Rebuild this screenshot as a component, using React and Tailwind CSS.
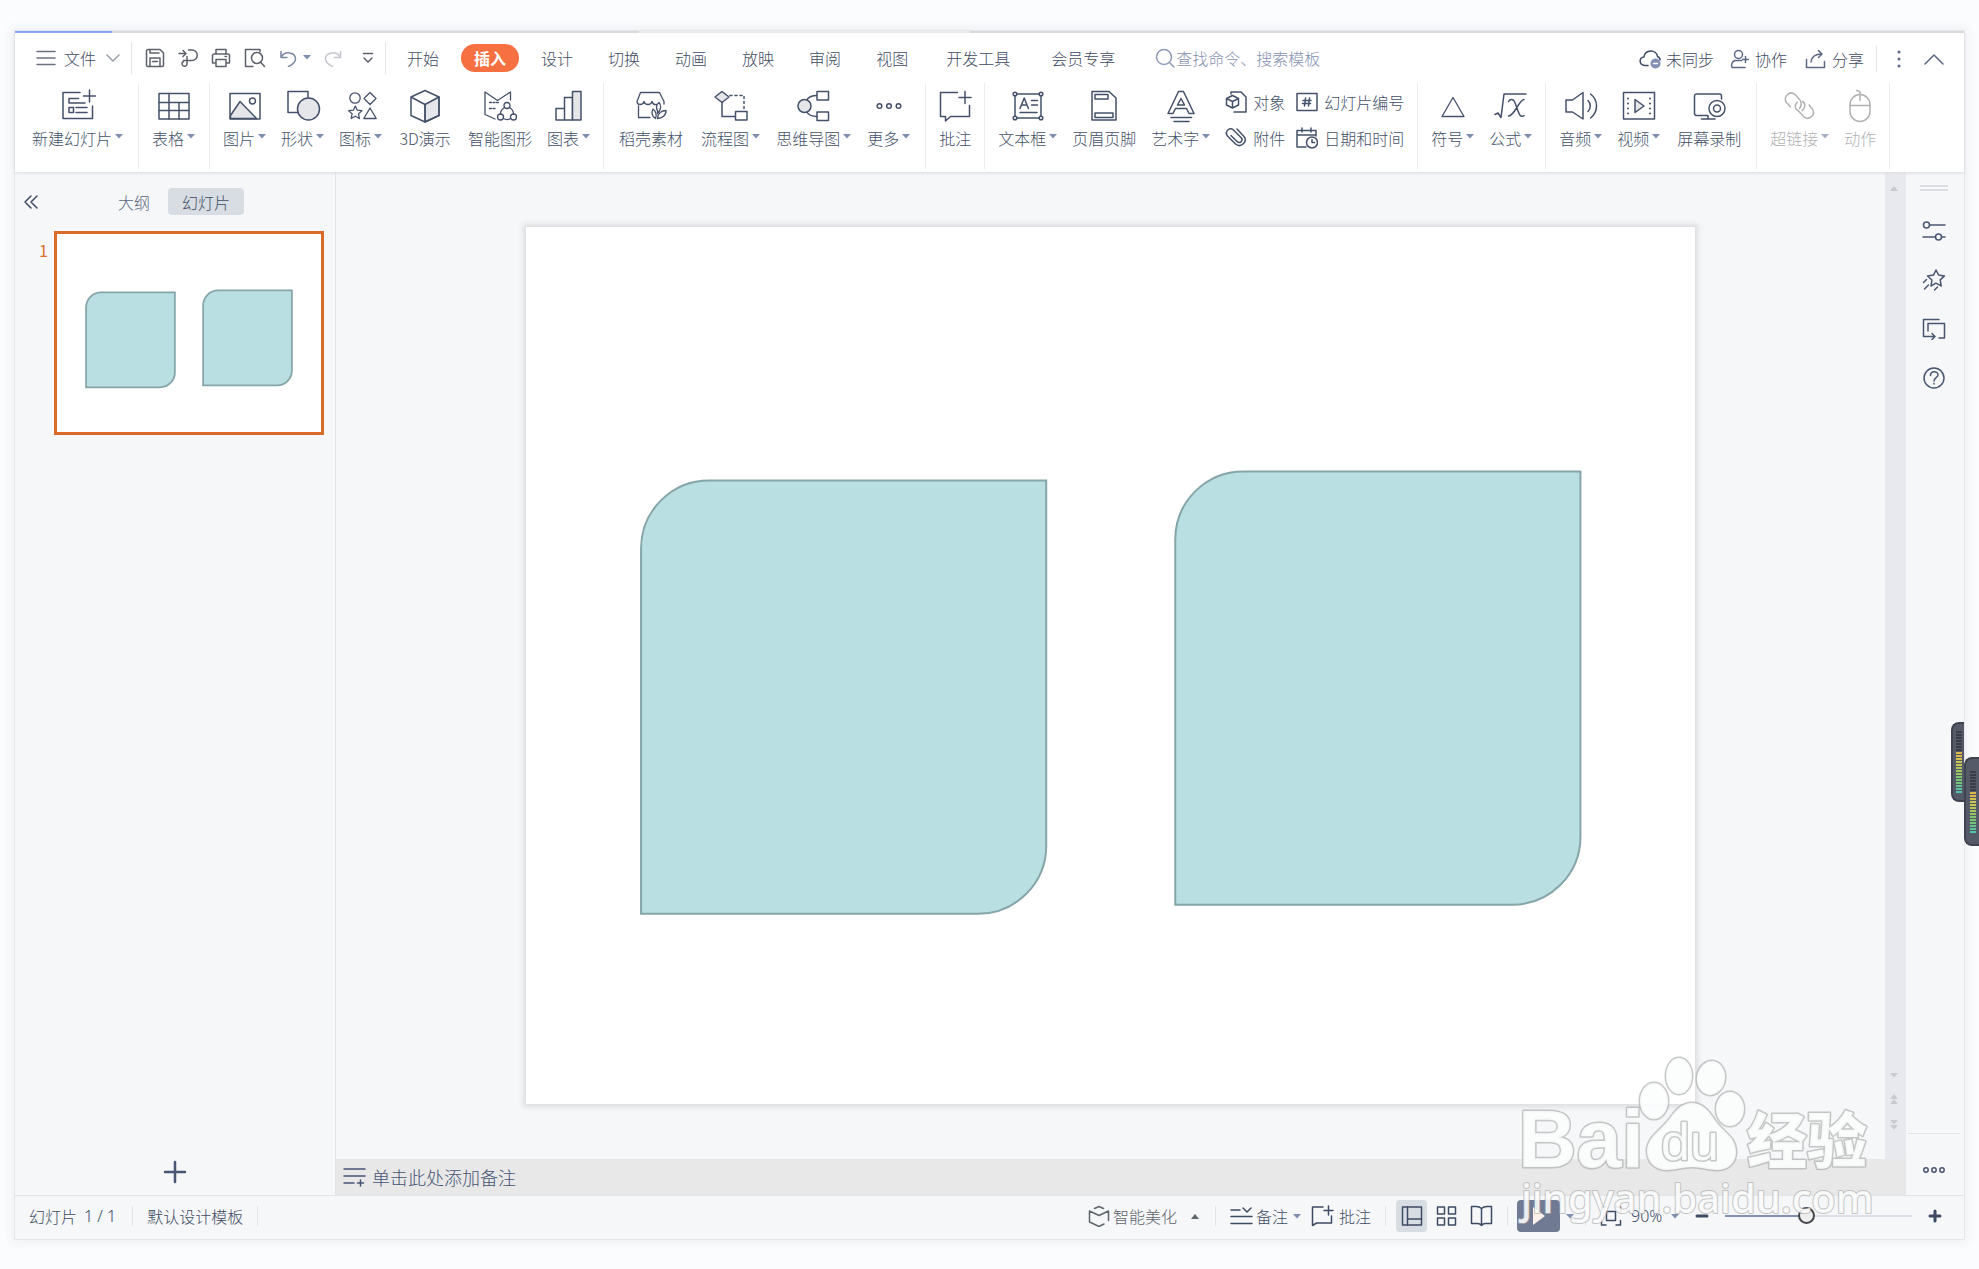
import React, { useState } from 'react';

/* ---------- icons ---------- */

const Svg = ({ w = 36, h = 34, sw = 1.5, className = '', children }) => (
  <svg
    width={w}
    height={h}
    viewBox={`0 0 ${w} ${h}`}
    fill="none"
    stroke="currentColor"
    strokeWidth={sw}
    strokeLinejoin="round"
    strokeLinecap="round"
    aria-hidden="true"
    className={`shrink-0 ${className}`}
  >
    {children}
  </svg>
);

const SHADE = '#e4e6ea';

const icons = {
  newSlide: (
    <Svg>
      <path d="M20 3.500H3v26h29.500V17M29.500 1v12M23.500 7h12M9 9.500h9.500M9 9.500v4.500h16M16 18.500h11M16 23.500h11" />
      <rect x="9" y="18.500" width="4.500" height="5" />
    </Svg>
  ),
  table: (
    <Svg>
      <rect x="3" y="4.500" width="30" height="25.500" />
      <path d="M3 13.500h30M3 21.500h30M13 4.500V30M23 13.500V30" />
    </Svg>
  ),
  picture: (
    <Svg>
      <path d="M3.500 26.500L13 12.500 29.500 29.500H3.500z" fill={SHADE} />
      <rect x="3" y="4.500" width="30" height="25.500" />
      <circle cx="25.500" cy="12" r="3" />
    </Svg>
  ),
  shape: (
    <Svg>
      <rect x="3" y="2.500" width="20" height="21" />
      <circle cx="23.500" cy="20" r="11" fill={SHADE} />
    </Svg>
  ),
  glyphs: (
    <Svg sw={1.300}>
      <circle cx="12" cy="9" r="5.200" />
      <path d="M27 3.500l6 6-6 6-6-6zM27 19l6.200 10.500H20.800zM12.300 17l2 4.200 4.600.5-3.400 3.200.9 4.600-4.100-2.300-4.100 2.300.9-4.600-3.400-3.200 4.600-.5z" />
    </Svg>
  ),
  cube: (
    <Svg>
      <path d="M18 15.500L32 8v18.500L18 33z" fill={SHADE} />
      <path d="M18 1.500L32 8v18.500L18 33 4 26.500V8zM4 8l14 7.500V33" />
    </Svg>
  ),
  smart: (
    <Svg sw={1.300}>
      <path d="M13 30L3 25.500V3l12.500 8.500L28.500 3v8" />
      <path d="M7.500 13.500h9M7.500 19.500h7" strokeDasharray="2 1.500" />
      <circle cx="25" cy="16.500" r="3" />
      <circle cx="18.500" cy="28" r="3" />
      <circle cx="31.500" cy="28" r="3" />
      <path d="M22.500 18.500c-2.500 1.500-4 3.500-4 6.500M27.500 18.500c2.500 1.500 4 3.500 4 6.500M21.500 29.500c2 1.200 5 1.200 7 0" />
    </Svg>
  ),
  chart: (
    <Svg>
      <path d="M5 31V19.500h8.500V31zM13.500 31V8.500h8V31z" />
      <path d="M21.500 31V2.500H30V31z" fill={SHADE} />
    </Svg>
  ),
  store: (
    <Svg sw={1.300}>
      <path d="M5.500 17v11.500H17M4 12.500L7.500 3.500h19L31 12.500M4 12.500c0 4 6 4 7 0 1 4 7 4 8 0 .8 2.500 2.500 3.500 4.500 3M31 12.500V15" />
      <path d="M22.500 29.500c-4-2-4-6.500-2.500-9.500 3 2 4 6.500 2.500 9.500zM24.500 22c-1.500-3-1-6.500 1.500-8.500 2.500 2.500 2.500 7-1.500 11zM24.500 29.500c0-5 4-8 8.500-8 .5 4.500-4 8-8.500 8z" />
    </Svg>
  ),
  flow: (
    <Svg>
      <path d="M9 2.500L16 8l-7 5.500L2 8z" fill={SHADE} />
      <path d="M9 13.500v14h13" />
      <path d="M17 6.500h14v15" strokeDasharray="2 3" />
      <rect x="22.500" y="22.500" width="11.500" height="8.500" />
    </Svg>
  ),
  mind: (
    <Svg>
      <path d="M21 6.500c-6 0-9 2-10.500 5M21 27.500c-6 0-9-2-10.500-5" />
      <circle cx="8.500" cy="17" r="6.500" fill={SHADE} />
      <rect x="21" y="2.500" width="11.500" height="8.500" />
      <rect x="21" y="23" width="11.500" height="8.500" />
    </Svg>
  ),
  more: (
    <Svg>
      <circle cx="8.500" cy="17" r="2.300" />
      <circle cx="18" cy="17" r="2.300" />
      <circle cx="27.500" cy="17" r="2.300" />
    </Svg>
  ),
  comment: (
    <Svg>
      <path d="M20.500 3.500h-17v24H8.500V32l5-4.500h19V16.500M28 2.500v12M22 8.500h12" />
    </Svg>
  ),
  textBox: (
    <Svg>
      <rect x="5" y="5" width="26" height="24" />
      <path d="M10 19.500l4.200-10.500 4.200 10.500M11.500 16h5.500M21.500 11.500h6M21.500 16h6M10 23.500h17" />
      <g fill="#fff">
        <circle cx="5" cy="5" r="1.800" />
        <circle cx="31" cy="5" r="1.800" />
        <circle cx="5" cy="29" r="1.800" />
        <circle cx="31" cy="29" r="1.800" />
      </g>
    </Svg>
  ),
  headerFooter: (
    <Svg>
      <path d="M6 2.500h17L30 9v22H6z" />
      <rect x="9" y="5.500" width="13" height="4.500" />
      <rect x="9" y="24" width="18" height="4.500" />
    </Svg>
  ),
  wordArt: (
    <Svg>
      <path d="M15.500 2.500h5L31 24.500h-5l-2.500-5h-11l-2.500 5H5zM18 9.500l-3.500 6.500h7zM8 28.500h20.500M11 32.500h15" />
    </Svg>
  ),
  symbol: (
    <Svg sw={1.300}>
      <path d="M18 8.500L29 27.500H7z" />
    </Svg>
  ),
  formula: (
    <Svg>
      <path d="M2 25.500l3-1.500 3 4.500L11 5h22M15.500 12.500c1-2.500 4.500-3 6 0l4.500 12c1.200 3 3.500 3.500 5 2M31 10.500c-5.500 1-9 16-15.500 16.500" />
    </Svg>
  ),
  audio: (
    <Svg>
      <path d="M3 11h6.500L20 3.500V30L9.500 23H3zM25 11.500c3 3 3 8 0 11M27.500 5c8 6 8 18 0 24" />
    </Svg>
  ),
  video: (
    <Svg>
      <rect x="2.500" y="3.500" width="31" height="26.500" />
      <path d="M14 10.500l9 6.500-9 6.500z" fill={SHADE} />
      <path d="M7 9.500v.1M7 14.500v.1M7 19.500v.1M7 24.500v.1M29 9.500v.1M29 14.500v.1M29 19.500v.1M29 24.500v.1" strokeWidth="2" />
    </Svg>
  ),
  record: (
    <Svg>
      <path d="M17 26.500H5.500a2 2 0 0 1-2-2V7a2 2 0 0 1 2-2h23a2 2 0 0 1 2 2v3M10.500 30H24M17 26.500V30" />
      <circle cx="26" cy="19.500" r="8" fill="#fff" />
      <circle cx="26" cy="19.500" r="3.500" />
    </Svg>
  ),
  link: (
    <Svg>
      <path d="M8.500 18l-4-4.500c-4-5.500 3.500-12.500 8.500-8l5 5.500c2 3.500 1.500 6-.5 8.500M15.500 21.500c-3-2.500-3-6 0-8.500M20.500 12.500c3.500 2 3 6.500-.5 9M27 16l3 3.500c4.500 5.500-2.500 12.500-8 8.500l-6-6.500" />
    </Svg>
  ),
  mouse: (
    <Svg>
      <rect x="8" y="5.500" width="20" height="27" rx="10" />
      <path d="M8 16.500h20M18 11.500v-8c0-1.500-1-2-3.500-2" />
    </Svg>
  ),
  object: (
    <Svg w={22} h={22}>
      <path d="M6 3V1h10l5 5v15H9" />
      <path d="M7.500 4.500L13.500 7.500V14l-6 3-6-3V7.500zM1.500 7.500l6 3 6-3M7.500 10.500V17" />
    </Svg>
  ),
  slideNo: (
    <Svg w={22} h={22}>
      <rect x="1" y="2.500" width="20" height="17" />
      <path d="M9.500 7l-1 8M13.500 7l-1 8M7 9.500h8M6.500 12.500h8" />
    </Svg>
  ),
  attach: (
    <Svg w={22} h={22}>
      <path d="M12 2l7 7.500c4 5-3 12-8.500 7.500L2.500 9C-1 4 5 0 8.500 3l8 8c2 3-2 6-4.500 3.500L6 8.500" />
    </Svg>
  ),
  dateTime: (
    <Svg w={22} h={22}>
      <path d="M20 9V3.500H1V20h9M1 8h19M6 1v4M15 1v4" />
      <circle cx="16" cy="15.500" r="5.500" fill="#fff" />
      <path d="M16 12.500v3h2.500" />
    </Svg>
  ),
};

const Caret = ({ className = 'text-[#7f8db0]', up = false }) => (
  <svg width="8" height="5" viewBox="0 0 8 5" fill="currentColor" aria-hidden="true" className={`shrink-0 ${className}`}>
    <path d={up ? 'M4 0l4 5H0z' : 'M0 0h8L4 4.500z'} />
  </svg>
);

/* ---------- top bar ---------- */

const TABS = ['开始', '插入', '设计', '切换', '动画', '放映', '审阅', '视图'];
const WIDE_TABS = ['开发工具', '会员专享'];

const Rule = ({ className = 'h-8' }) => <span className={`w-px shrink-0 bg-[#e3e4e7] ${className}`} />;

const MenuBar = () => {
  const [tab, setTab] = useState('插入');

  return (
    <div className="h-[49px] flex items-center text-base leading-5">
      <button className="flex items-center pl-[21px] text-[#3f4b63]">
        <Svg w={20} h={16} className="text-[#6b7180]">
          <path d="M1 1.500h18M1 8h18M1 14.500h18" />
        </Svg>
        <span className="ml-2">文件</span>
        <Svg w={14} h={8} className="ml-[10px] text-[#9aa0aa]">
          <path d="M1 1l6 6 6-6" />
        </Svg>
      </button>
      <Rule className="h-8 ml-[11px]" />

      <div className="flex items-center ml-[13px] text-[#5d616b]">
        <button aria-label="保存">
          <Svg w={20} h={20}>
            <path d="M1.500 3a1.500 1.500 0 0 1 1.500-1.500h12L18.500 5v12a1.500 1.500 0 0 1-1.500 1.500H3A1.500 1.500 0 0 1 1.500 17zM5 1.500V5h9M5 18.500V10h10v8.500M7.500 13.500h5" />
          </Svg>
        </button>
        <button aria-label="输出" className="ml-[13px]">
          <Svg w={20} h={20}>
            <path d="M1 5.500h6.500M5 2.500l3 3-3 3M10.500 2h3.500a5 5 0 0 1 0 10.500H5.500M9 8.500V16a2.500 2.500 0 1 1-3.500-2.500" />
          </Svg>
        </button>
        <button aria-label="打印" className="ml-[13px]">
          <Svg w={20} h={20}>
            <path d="M5 6V1.500h10V6M5 15H1.500V7.500A1.500 1.500 0 0 1 3 6h14a1.500 1.500 0 0 1 1.500 1.500V15H15M5 11.500h10v7H5zM14 8.500h1.500" />
          </Svg>
        </button>
        <button aria-label="预览" className="ml-[13px]">
          <Svg w={22} h={20}>
            <path d="M16 4V1.500H1.500v17H9" />
            <circle cx="13" cy="10" r="5.500" />
            <path d="M16.500 14l4 4.500" />
          </Svg>
        </button>
        <button aria-label="撤销" className="ml-[13px] flex items-center text-[#7c87a3]">
          <Svg w={18} h={18}>
            <path d="M2 2.500v6h6M2 8.500c4-7.500 14.500-5 14.500 1.500 0 3.500-3 5.500-7 7.500" />
          </Svg>
          <Caret className="ml-[6px] text-[#7f8db0]" />
        </button>
        <button aria-label="恢复" className="ml-[13px] text-[#c5c8ce]">
          <Svg w={18} h={18}>
            <path d="M16.500 2.500v6h-6M16.500 8.500C12.500 1 1.500 3.500 1.500 10c0 3.500 3 5.500 7 7.500" />
          </Svg>
        </button>
        <button aria-label="自定义" className="ml-5">
          <Svg w={12} h={12}>
            <path d="M1.500 1.500h9M2 6l4 4 4-4" />
          </Svg>
        </button>
      </div>
      <Rule className="h-8 ml-[11px]" />

      <div role="tablist" className="flex items-center gap-[9px] ml-2">
        {TABS.map((name) => (
          <button
            key={name}
            role="tab"
            aria-selected={tab === name}
            onClick={() => setTab(name)}
            className={`h-7 px-[13px] rounded-full whitespace-nowrap ${
              tab === name ? 'bg-[#f77042] text-white font-bold' : 'text-[#3f4b63]'
            }`}
          >
            {name}
          </button>
        ))}
        {WIDE_TABS.map((name) => (
          <button key={name} role="tab" aria-selected={tab === name} onClick={() => setTab(name)} className="h-7 px-4 rounded-full whitespace-nowrap text-[#3f4b63]">
            {name}
          </button>
        ))}
      </div>

      <label className="flex items-center ml-6 text-[#8f9ab5]">
        <Svg w={20} h={20}>
          <circle cx="9" cy="9" r="7.500" />
          <path d="M14.500 14.500l4.500 4.500" />
        </Svg>
        <input
          type="text"
          aria-label="搜索"
          placeholder="查找命令、搜索模板"
          className="w-40 ml-px bg-transparent outline-none placeholder:text-[#8591b0] placeholder:opacity-100"
        />
      </label>

      <div className="flex items-center ml-auto pr-[19px] pt-[2px] text-[#3f4b63]">
        <button className="flex items-center">
          <Svg w={22} h={20}>
            <path d="M9 16.500H5.500C-.5 15.500 0 8.500 5 8c1-8 12.500-8 13.500-.5 1.500.5 2.500 2 2.500 3.500" />
            <circle cx="16.500" cy="14.500" r="5" fill="#8390b4" stroke="none" />
            <path d="M14.500 14.500h4" stroke="#fff" />
          </Svg>
          <span className="ml-[5px]">未同步</span>
        </button>
        <button className="flex items-center ml-4">
          <Svg w={20} h={20} className="text-[#5c6785]">
            <circle cx="8.500" cy="5.500" r="4" />
            <path d="M15 18.500H2.500c-2-1-.5-7 3-7h6M15.500 7.500v6M12.500 10.500h6" />
          </Svg>
          <span className="ml-[5px]">协作</span>
        </button>
        <button className="flex items-center ml-[18px]">
          <Svg w={22} h={20} className="text-[#5c6785]">
            <path d="M1.500 10.500v8h18v-6M6 13c.5-5 4-8 11-8M13.500 1.500L17 5l-3.500 3.500" />
          </Svg>
          <span className="ml-[5px]">分享</span>
        </button>
        <Rule className="h-[26px] ml-3" />
        <button aria-label="更多选项" className="ml-5">
          <svg width="4" height="18" viewBox="0 0 4 18" fill="#5c6785" aria-hidden="true">
            <circle cx="2" cy="2" r="1.500" />
            <circle cx="2" cy="9" r="1.500" />
            <circle cx="2" cy="16" r="1.500" />
          </svg>
        </button>
        <button aria-label="折叠功能区" className="ml-[22px]">
          <Svg w={22} h={12} className="text-[#5c6785]">
            <path d="M2 11l9-9 9 9" />
          </Svg>
        </button>
      </div>
    </div>
  );
};

/* ---------- ribbon ---------- */

const Tool = ({ icon, label, menu, disabled, className = '' }) => (
  <button
    disabled={disabled}
    className={`flex flex-col items-center gap-[5px] whitespace-nowrap ${disabled ? 'text-[#b1b1b4]' : 'text-[#45516a]'} ${className}`}
  >
    {icons[icon]}
    <span className="flex items-center">
      {label}
      {menu && <Caret className={`ml-[3px] mb-1 ${disabled ? 'text-[#a9b1c4]' : 'text-[#7f8db0]'}`} />}
    </span>
  </button>
);

const SmallTool = ({ icon, label }) => (
  <button className="flex items-center gap-[6px] whitespace-nowrap text-[#45516a]">
    {icons[icon]}
    {label}
  </button>
);

const Group = ({ className = 'gap-[15px] px-[13px]', children }) => (
  <div className={`h-[86px] flex items-start pt-[6px] border-r border-[#ececef] ${className}`}>{children}</div>
);

const Ribbon = () => (
  <div className="flex h-[90px] pt-px text-base leading-5">
    <Group className="pl-[17px] pr-[15px]">
      <Tool icon="newSlide" label="新建幻灯片" menu />
    </Group>
    <Group className="pl-[13px] pr-[14px]">
      <Tool icon="table" label="表格" menu />
    </Group>
    <Group>
      <Tool icon="picture" label="图片" menu />
      <Tool icon="shape" label="形状" menu />
      <Tool icon="glyphs" label="图标" menu />
      <Tool icon="cube" label="3D演示" className="w-14" />
      <Tool icon="smart" label="智能图形" />
      <Tool icon="chart" label="图表" menu />
    </Group>
    <Group className="gap-4 pl-[13px] pr-[15px]">
      <Tool icon="store" label="稻壳素材" className="w-[68px]" />
      <Tool icon="flow" label="流程图" menu />
      <Tool icon="mind" label="思维导图" menu />
      <Tool icon="more" label="更多" menu />
    </Group>
    <Group className="px-[11px]">
      <Tool icon="comment" label="批注" />
    </Group>
    <Group>
      <Tool icon="textBox" label="文本框" menu />
      <Tool icon="headerFooter" label="页眉页脚" />
      <Tool icon="wordArt" label="艺术字" menu />
      <div className="grid grid-cols-[auto_auto] gap-x-[11px] gap-y-[14px] pt-[2px]">
        <SmallTool icon="object" label="对象" />
        <SmallTool icon="slideNo" label="幻灯片编号" />
        <SmallTool icon="attach" label="附件" />
        <SmallTool icon="dateTime" label="日期和时间" />
      </div>
    </Group>
    <Group>
      <Tool icon="symbol" label="符号" menu />
      <Tool icon="formula" label="公式" menu />
    </Group>
    <Group>
      <Tool icon="audio" label="音频" menu />
      <Tool icon="video" label="视频" menu />
      <Tool icon="record" label="屏幕录制" className="w-[68px]" />
    </Group>
    <Group>
      <Tool icon="link" label="超链接" menu disabled />
      <Tool icon="mouse" label="动作" disabled className="w-8" />
    </Group>
  </div>
);

/* ---------- slide ---------- */

// Two shapes with opposite corners rounded
const SlideDrawing = ({ stroke }) => (
  <svg viewBox="0 0 1169 876" className="block w-full h-full" aria-label="幻灯片 1">
    <g fill="#badfe2" stroke="#86a5a8" strokeWidth={stroke}>
      <path d="M183 253H520V618a68 68 0 0 1-68 68H115V321a68 68 0 0 1 68-68z" />
      <path d="M717 244H1054V609a68 68 0 0 1-68 68H649V312a68 68 0 0 1 68-68z" />
    </g>
  </svg>
);

const SlidePanel = () => (
  <aside className="w-[321px] shrink-0 flex flex-col border-r border-[#e2e4e8]">
    <div className="flex items-center h-[59px] pl-2 text-base leading-5 text-[#3f4b63]">
      <button aria-label="收起">
        <Svg w={16} h={16}>
          <path d="M8 2L2 8l6 6M14 2L8 8l6 6" />
        </Svg>
      </button>
      <button className="ml-[79px] text-[#5b667d]">大纲</button>
      <button className="ml-[18px] h-[27px] px-[14px] rounded bg-[#d8dde4]">幻灯片</button>
    </div>
    <div className="flex pl-6">
      <span className="w-[15px] pt-[9px] text-base leading-5 font-normal text-[#dc6f2c]">1</span>
      <button className="w-[270px] h-[204px] p-[3px] border-[3px] border-[#d96c2b] bg-white">
        <SlideDrawing stroke={8} />
      </button>
    </div>
    <button aria-label="新建幻灯片" className="mt-auto mb-[11px] self-center text-[#4a5672]">
      <Svg w={24} h={24} sw={2.500}>
        <path d="M12 2v20M2 12h20" />
      </Svg>
    </button>
  </aside>
);

const ScrollBar = () => (
  <div className="w-[21px] shrink-0 flex flex-col items-center bg-[#e8e9ef] pr-[3px] pt-[14px] pb-[29px] text-[#c9cad0]">
    <Caret up className="text-[#c9cad0]" />
    <Caret className="mt-auto text-[#c9cad0]" />
    <div className="flex flex-col mt-4">
      <Caret up className="text-[#c9cad0]" />
      <Caret up className="text-[#c9cad0]" />
    </div>
    <div className="flex flex-col mt-4">
      <Caret className="text-[#c9cad0]" />
      <Caret className="text-[#c9cad0]" />
    </div>
  </div>
);

const Editor = () => (
  <main className="flex-1 min-w-0 flex flex-col">
    <div className="flex-1 min-h-0 flex">
      <div className="flex-1 flex items-center justify-center">
        <div className="w-[75.5%] aspect-[4/3] bg-white shadow-[0_0_5px_3px_#dcdee0]">
          <SlideDrawing stroke={2} />
        </div>
      </div>
      <ScrollBar />
    </div>
    <button className="h-9 flex items-center gap-[6px] pl-[7px] bg-[#e8e8e8] text-[18px] leading-6 text-[#465475]">
      <Svg w={23} h={20}>
        <path d="M1 2h21M1 9h21M1 16h10M17.500 13v6M14.500 16h6" />
      </Svg>
      单击此处添加备注
    </button>
  </main>
);

const TaskPane = () => (
  <aside className="w-[58px] shrink-0 flex flex-col items-center pr-[2px] pt-[13px] text-[#4a5672]">
    <span className="w-7 h-[6px] border-y-2 border-[#dcdde0]" />
    <button aria-label="属性" className="mt-[29px]">
      <Svg w={24} h={22}>
        <circle cx="4.500" cy="5" r="3" />
        <path d="M7.500 5H23M1 17h12.500M19.500 17H23" />
        <circle cx="16.500" cy="17" r="3" />
      </Svg>
    </button>
    <button aria-label="动画窗格" className="mt-[26px]">
      <Svg w={24} h={24}>
        <path d="M14 2l2.600 5 5.900.9-4.300 4 1 6L14 15.200 9 18l.9-6-4.400-4 6-.9zM1.500 14.500l3-3M2.500 21l4-4M12.500 22l3-3" />
      </Svg>
    </button>
    <button aria-label="幻灯片切换" className="mt-[26px]">
      <Svg w={24} h={22}>
        <path d="M17 1.500H1.500v17h11M10 15.500l3 3-3 3M6 13V5.500h16.500v14.500H17" />
      </Svg>
    </button>
    <button aria-label="帮助" className="mt-[26px]">
      <Svg w={24} h={24}>
        <circle cx="12" cy="12" r="10" />
        <path d="M8.500 9.500c0-5 7.500-5 7.500-.5 0 2.500-4 3-4 6M12 17.500v.5" />
      </Svg>
    </button>
    <span className="w-[52px] h-px mt-auto bg-[#e2e4e8]" />
    <button aria-label="更多工具" className="mt-[31px] mb-5">
      <Svg w={24} h={10}>
        <circle cx="4" cy="5" r="2.200" />
        <circle cx="12" cy="5" r="2.200" />
        <circle cx="20" cy="5" r="2.200" />
      </Svg>
    </button>
  </aside>
);

/* ---------- status bar ---------- */

const StatusBar = () => {
  const [zoom, setZoom] = useState(43);

  return (
    <footer className="h-[44px] shrink-0 flex items-center border-t border-[#e2e4e8] pl-[14px] pr-[22px] pb-[3px] text-base leading-5 whitespace-nowrap text-[#3f4b63]">
      <span className="flex gap-[7px]">
        幻灯片
        <span className='font-["Noto_Sans",sans-serif]'>1 / 1</span>
      </span>
      <Rule className="h-5 ml-4" />
      <span className="ml-[14px]">默认设计模板</span>
      <Rule className="h-5 ml-[14px]" />

      <div className="ml-auto flex items-center">
        <button className="flex items-center text-[#5f646d]">
          <Svg w={22} h={22}>
            <path d="M6.500 3.500L11 1.500l4.500 2M1.500 6v11l9.500 4.500L16 19M20.500 15.500V6L11 10.500 1.500 6" />
          </Svg>
          <span className="ml-[3px]">智能美化</span>
          <Caret up className="ml-[14px] text-[#5f646d]" />
        </button>
        <Rule className="h-5 ml-4" />
        <button className="flex items-center ml-[14px]">
          <Svg w={23} h={20}>
            <path d="M1 4h9M13 2l4 4 4-4M1 10.500h21M1 17.500h21" />
          </Svg>
          <span className="ml-[3px]">备注</span>
          <Caret className="ml-[5px] text-[#7f8db0]" />
        </button>
        <button className="flex items-center ml-[10px]">
          <Svg w={24} h={22}>
            <path d="M12 2H1.500v18.500l4-2.500h15v-7M17.500 1v9M13 5.500h9" />
          </Svg>
          <span className="ml-1">批注</span>
        </button>
        <Rule className="h-5 ml-[14px]" />
        <button aria-label="普通视图" className="flex items-center justify-center w-[31px] h-8 ml-[10px] rounded-sm bg-[#d8dde4]">
          <Svg w={22} h={20}>
            <rect x="1.500" y="1" width="19" height="18" />
            <path d="M6.500 1v18M6.500 13h14" />
          </Svg>
        </button>
        <button aria-label="幻灯片浏览" className="ml-[9px]">
          <Svg w={22} h={22}>
            <rect x="1.500" y="2" width="7" height="7" />
            <rect x="12.500" y="2" width="7" height="7" />
            <rect x="1.500" y="13" width="7" height="7" />
            <rect x="12.500" y="13" width="7" height="7" />
          </Svg>
        </button>
        <button aria-label="阅读视图" className="ml-3">
          <Svg w={23} h={22}>
            <path d="M11.500 3.500C10 2 8 1.500 6 1.500H1.500v17H8c1.500 0 2.500.8 3.500 2 1-1.200 2-2 3.500-2h6.500v-17H17c-2 0-4 .5-5.500 2zM11.500 3.500v17" />
          </Svg>
        </button>
        <Rule className="h-5 ml-[14px]" />
        <button aria-label="从当前幻灯片开始播放" className="flex items-center justify-center w-[43px] h-8 ml-[9px] rounded-sm bg-[#707a93]">
          <svg width="14" height="18" viewBox="0 0 14 18" fill="#fdf1ea" aria-hidden="true">
            <path d="M1 0l12 9L1 18z" />
          </svg>
        </button>
        <button aria-label="播放选项" className="ml-[6px]">
          <Caret />
        </button>
        <Rule className="h-5 ml-[11px]" />
        <button aria-label="适应窗口" className="ml-[14px]">
          <Svg w={22} h={20}>
            <path d="M6 1H1.500v4.500M16 1h4.500v4.500M6 19H1.500v-4.500M16 19h4.500v-4.500" />
            <rect x="6.500" y="5.500" width="9" height="9" />
          </Svg>
        </button>
        <label className="flex items-center ml-[9px]">
          <select aria-label="显示比例" className='appearance-none bg-transparent outline-none w-9 font-["Noto_Sans",sans-serif]'>
            <option>90%</option>
          </select>
          <Caret className="ml-1 text-[#7f8db0]" />
        </label>
        <button aria-label="缩小" className="ml-4">
          <Svg w={14} h={14} sw={3}>
            <path d="M2 7h10" />
          </Svg>
        </button>
        <input
          type="range"
          aria-label="缩放"
          min="0"
          max="100"
          value={zoom}
          onChange={(e) => setZoom(Number(e.target.value))}
          className="appearance-none w-[187px] h-[18px] mx-4 bg-transparent [&::-webkit-slider-runnable-track]:h-[2px] [&::-webkit-slider-runnable-track]:bg-[linear-gradient(90deg,#8391b0_43%,#dcdfe7_43%)] [&::-webkit-slider-thumb]:appearance-none [&::-webkit-slider-thumb]:size-[17px] [&::-webkit-slider-thumb]:-mt-2 [&::-webkit-slider-thumb]:rounded-full [&::-webkit-slider-thumb]:border-2 [&::-webkit-slider-thumb]:border-[#45474c] [&::-webkit-slider-thumb]:bg-[#eeeeee]"
        />
        <button aria-label="放大">
          <Svg w={14} h={14} sw={3}>
            <path d="M2 7h10M7 2v10" />
          </Svg>
        </button>
      </div>
    </footer>
  );
};

/* ---------- overlays ---------- */

const LEVELS = ['#d9b64e', '#d9b64e', '#d3c14f', '#cdc451', '#c6c653', '#b5c658', '#a3c75e', '#95c664', '#84c46e', '#7cc475', '#74c37c', '#66c18b', '#5cc19b', '#53c2aa'];

const Meter = ({ className }) => (
  <div className={`absolute flex flex-col justify-center items-center gap-px bg-[#555a69] border-2 border-r-0 border-[#3f434f] rounded-l-lg ${className}`}>
    {[0, 1, 2, 3, 4, 5, 6].map((i) => (
      <span key={i} className="w-[6px] h-[2px] bg-[#3a3d48]" />
    ))}
    {LEVELS.map((color, i) => (
      <span key={i} className="w-[6px] h-[2px]" style={{ backgroundColor: color }} />
    ))}
  </div>
);

const Watermark = () => (
  <svg
    width="370"
    height="180"
    viewBox="0 0 370 180"
    className="absolute right-[99px] bottom-[39px] pointer-events-none"
    aria-hidden="true"
  >
    <g
      fill="#fcfdfd"
      fillOpacity="0.9"
      stroke="#b0b0b0"
      strokeOpacity="0.7"
      strokeWidth="3"
      strokeLinejoin="round"
      paintOrder="stroke"
      fontFamily='"Liberation Sans", sans-serif'
    >
      <text x="8" y="117" fontSize="81" fontWeight="700">Bai</text>
      <ellipse cx="144" cy="51" rx="14" ry="18" />
      <ellipse cx="169" cy="26" rx="13" ry="18" />
      <ellipse cx="201" cy="28" rx="14" ry="17" transform="rotate(10 201 28)" />
      <ellipse cx="220" cy="59" rx="14" ry="17" />
      <path d="M182 53c12 0 18 10 25 20 8 10 19 15 19 29 0 11-8 18-19 18-9 0-15-3-25-3s-16 3-25 3c-12 0-20-8-20-19 0-12 10-18 19-28 7-8 13-20 26-20z" />
      <text x="151" y="110" fontSize="52">du</text>
      <text x="237" y="113" fontSize="60" fontWeight="900" fontFamily='"Noto Sans CJK SC", sans-serif'>经验</text>
      <text x="11" y="163" fontSize="40" fontWeight="500" strokeWidth="2" fontFamily='"Noto Sans", sans-serif'>jingyan.baidu.com</text>
    </g>
  </svg>
);

const App = () => (
  <div className='relative h-screen min-w-[1900px] flex flex-col overflow-hidden bg-[#fbfcfe] px-[15px] pt-[31px] pb-[30px] font-light font-["Noto_Sans_CJK_SC",sans-serif]'>
    <div className="flex-1 min-h-0 flex flex-col bg-[#f5f7f9] shadow-[0_0_0_1px_#e6e7ea,0_0_9px_4px_#f0f1f4]">
      <div className="flex h-[2px] shrink-0 bg-[#ececee]">
        <span className="w-[5%] bg-[#7ea2f2]" />
        <span className="w-[27%] bg-[#d9d9dd]" />
        <span className="w-[51%] ml-auto bg-[#d9d9dd]" />
      </div>
      <header className="shrink-0 bg-white shadow-[0_1px_3px_#d9dadd] z-10">
        <MenuBar />
        <Ribbon />
      </header>
      <div className="flex-1 min-h-0 flex">
        <SlidePanel />
        <Editor />
        <TaskPane />
      </div>
      <StatusBar />
    </div>
    <Watermark />
    <Meter className="right-[15px] top-[722px] w-[13px] h-20" />
    <Meter className="right-0 top-[757px] w-[15px] h-[89px]" />
  </div>
);

export default App;
